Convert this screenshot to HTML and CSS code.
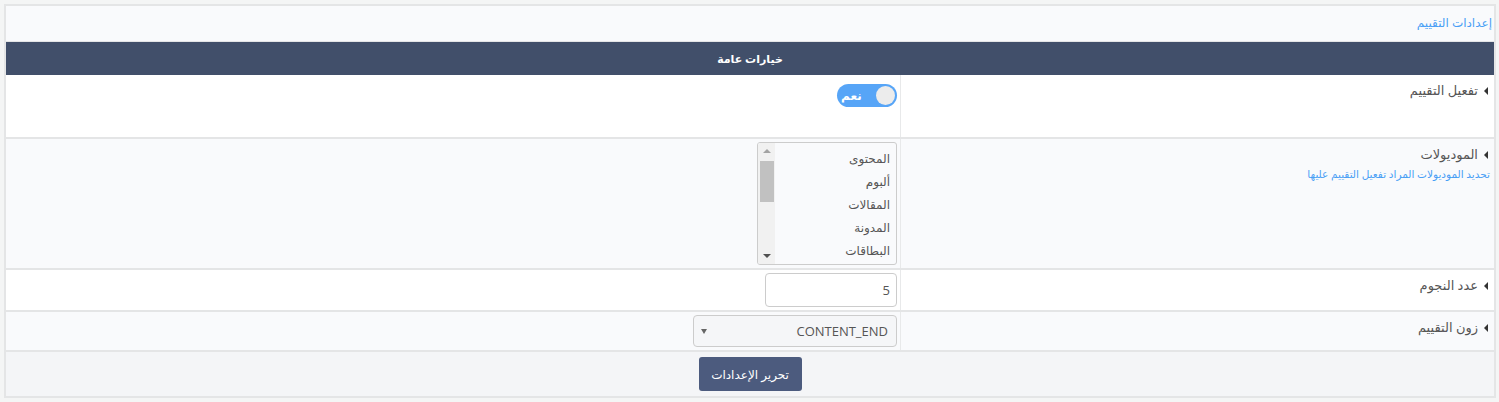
FILE: index.html
```html
<!DOCTYPE html>
<html lang="ar" dir="rtl">

<head>
    <meta charset="UTF-8">
    <meta name="viewport" content="width=device-width, initial-scale=1.0">
    <title>إعدادات التقييم</title>
    <link rel="stylesheet" href="styles.css">
</head>

<body>
    <div class="panel">
        <div class="panel-head">إعدادات التقييم</div>
        <div class="section-title">خيارات عامة</div>

        <div class="row row-tall">
            <div class="label"><span class="caret"></span>تفعيل التقييم</div>
            <div class="field">
                <div class="toggle">
                    <span class="knob"></span>
                    <span class="toggle-text">نعم</span>
                </div>
            </div>
        </div>

        <div class="row row-alt">
            <div class="label">
                <div><span class="caret"></span>الموديولات</div>
                <div class="hint">تحديد الموديولات المراد تفعيل التقييم عليها</div>
            </div>
            <div class="field">
                <div class="listbox">
                    <div class="options">
                        <div>المحتوى</div>
                        <div>ألبوم</div>
                        <div>المقالات</div>
                        <div>المدونة</div>
                        <div>البطاقات</div>
                    </div>
                    <div class="scrollbar">
                        <span class="arrow-up"></span>
                        <span class="thumb"></span>
                        <span class="spacer"></span>
                        <span class="arrow-down"></span>
                    </div>
                </div>
            </div>
        </div>

        <div class="row">
            <div class="label"><span class="caret"></span>عدد النجوم</div>
            <div class="field">
                <div class="textbox">5</div>
            </div>
        </div>

        <div class="row row-alt">
            <div class="label"><span class="caret"></span>زون التقييم</div>
            <div class="field">
                <div class="dropdown">
                    <span>CONTENT_END</span>
                    <span class="drop-arrow"></span>
                </div>
            </div>
        </div>

        <div class="panel-foot">
            <button class="btn">تحرير الإعدادات</button>
        </div>
    </div>
</body>

</html>
```

FILE: styles.css
```css
* {
    box-sizing: border-box;
    padding: 0;
    margin: 0;
}

body {
    margin: 4px 3px 4px 4px;
    background-color: #f4f5f5;
    font-family: "Open Sans", "DejaVu Sans", sans-serif;
    font-size: 12px;
    color: #555;
}

.panel {
    border: 2px solid #e4e5e6;
    background-color: #fff;
}

.panel-head {
    height: 36px;
    line-height: 34px;
    padding-right: 2px;
    background-color: #f9fafc;
    border-bottom: 1px solid #e4e5e6;
    color: #4a9ff5;
}

.section-title {
    height: 33px;
    line-height: 33px;
    text-align: center;
    background-color: #414f6a;
    color: #fff;
    font-size: 11px;
    font-weight: bold;
}

.row {
    display: grid;
    grid-template-columns: 594px 1fr;
    border-bottom: 2px solid #e4e5e6;
}

.row-alt {
    background-color: #f9fafc;
}

.row-tall {
    min-height: 64px;
}

.label {
    padding: 6px 4px 0 0;
    border-left: 1px solid #e8e9ea;
    line-height: 18px;
    font-size: 13px;
    color: #555;
}

.caret {
    display: inline-block;
    width: 0;
    height: 0;
    border-top: 4px solid transparent;
    border-bottom: 4px solid transparent;
    border-right: 4px solid #333;
    margin: 0 2px 0 6px;
}

.hint {
    margin-top: 2px;
    font-size: 10.5px;
    color: #4a9ff5;
}

.field {
    padding: 3px;
    display: flex;
    align-items: flex-start;
}

.toggle {
    margin-top: 6px;
    width: 60px;
    height: 23px;
    border-radius: 12px;
    background-color: #57a5f7;
    display: flex;
    align-items: center;
    justify-content: space-between;
    padding: 0 2px 0 4px;
}

.knob {
    width: 19px;
    height: 19px;
    border-radius: 50%;
    background-color: #ececec;
}

.toggle-text {
    color: #fff;
    font-weight: bold;
}

.listbox {
    width: 140px;
    height: 123px;
    border: 1px solid #ccc;
    border-radius: 3px;
    background-color: #f9fafc;
    display: flex;
    overflow: hidden;
}

.options {
    flex: 1;
    padding: 4px 6px 0 0;
}

.options div {
    height: 23px;
    line-height: 23px;
}

.scrollbar {
    width: 17px;
    background-color: #f1f1f1;
    display: flex;
    flex-direction: column;
    align-items: center;
}

.arrow-up,
.arrow-down {
    width: 0;
    height: 0;
    border-left: 4px solid transparent;
    border-right: 4px solid transparent;
    margin: 6px 0;
}

.arrow-up {
    border-bottom: 4px solid #a3a3a3;
}

.arrow-down {
    border-top: 4px solid #505050;
}

.thumb {
    width: 14px;
    height: 41px;
    background-color: #c1c1c1;
    margin-top: 2px;
}

.spacer {
    flex: 1;
}

.textbox {
    width: 132px;
    height: 34px;
    line-height: 32px;
    border: 1px solid #ccc;
    border-radius: 4px;
    background-color: #fff;
    padding-right: 6px;
    font-size: 13px;
}

.dropdown {
    width: 204px;
    height: 32px;
    border: 1px solid #ccc;
    border-radius: 4px;
    background-color: #f5f6f8;
    display: flex;
    align-items: center;
    justify-content: space-between;
    padding: 0 8px 0 7px;
    font-size: 13px;
}

.drop-arrow {
    width: 0;
    height: 0;
    border-left: 3px solid transparent;
    border-right: 3px solid transparent;
    border-top: 5px solid #666;
}

.panel-foot {
    height: 44px;
    background-color: #f4f5f7;
    display: flex;
    justify-content: center;
    align-items: center;
}

.btn {
    width: 103px;
    height: 34px;
    border: none;
    border-radius: 3px;
    background-color: #4c5b7e;
    color: #fff;
    font-family: "Open Sans", "DejaVu Sans", sans-serif;
    font-size: 12px;
}
```
